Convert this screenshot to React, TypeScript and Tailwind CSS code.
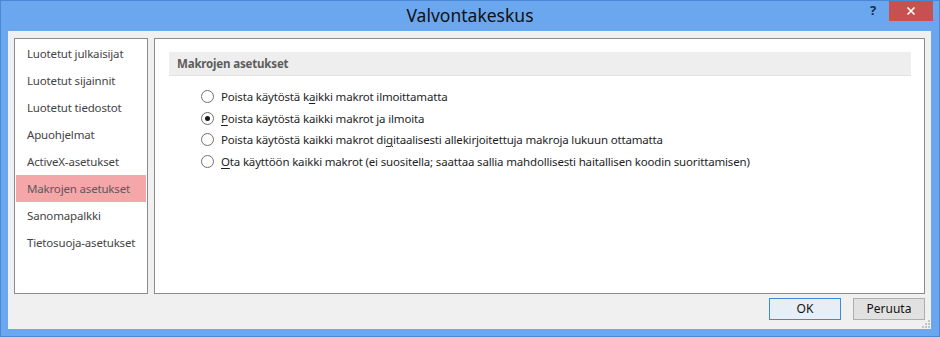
import React, { useState } from 'react';

const sections = [
  'Luotetut julkaisijat',
  'Luotetut sijainnit',
  'Luotetut tiedostot',
  'Apuohjelmat',
  'ActiveX-asetukset',
  'Makrojen asetukset',
  'Sanomapalkki',
  'Tietosuoja-asetukset',
];

// label split into [before, underlined letter, after]
const options: [string, string, string][] = [
  ['Poista käytöstä k', 'a', 'ikki makrot ilmoittamatta'],
  ['', 'P', 'oista käytöstä kaikki makrot ja ilmoita'],
  ['Poista käytöstä kaikki makrot di', 'g', 'itaalisesti allekirjoitettuja makroja lukuun ottamatta'],
  ['', 'O', 'ta käyttöön kaikki makrot (ei suositella; saattaa sallia mahdollisesti haitallisen koodin suorittamisen)'],
];

const Radio = ({ checked }: { checked: boolean }) => (
  <span className="w-[13px] h-[13px] rounded-full border border-[#6f6f6f] bg-white flex items-center justify-center shrink-0">
    {checked && <span className="w-[5px] h-[5px] rounded-full bg-[#1a1a1a]" />}
  </span>
);

const Grip = () => (
  <svg width="8" height="8" viewBox="0 0 8 8">
    {[
      [6, 0], [3, 3], [6, 3], [0, 6], [3, 6], [6, 6],
    ].map(([x, y], i) => (
      <rect key={i} x={x} y={y} width="2" height="2" fill="#c4c4c4" />
    ))}
  </svg>
);

const App = () => {
  const [selected, setSelected] = useState(1);
  const active = 'Makrojen asetukset';

  return (
    <div
      className="w-[940px] h-[337px] bg-[#6ba7ef] border border-[#4a88d6] flex flex-col overflow-hidden"
      style={{ fontFamily: '"Noto Sans", "Liberation Sans", sans-serif' }}
    >
      {/* title bar */}
      <div className="h-[30px] shrink-0 grid grid-cols-[1fr_auto_1fr]">
        <div />
        <div className="text-[17.5px] text-[#111] leading-[28px]">Valvontakeskus</div>
        <div className="flex justify-end items-start pr-[6px]">
          <div className="w-[20px] h-[20px] flex items-center justify-center text-[13px] font-bold text-[#1c2b4a] mr-[6px]">?</div>
          <div className="w-[44px] h-[20px] bg-[#c75050] flex items-center justify-center">
            <svg width="10" height="10" viewBox="0 0 10 10">
              <path d="M1.5 1.5 L8.5 8.5 M8.5 1.5 L1.5 8.5" stroke="#fff" strokeWidth="1.6" />
            </svg>
          </div>
        </div>
      </div>

      {/* client area */}
      <div className="flex-1 ml-[7px] mr-[8px] mb-[7px] bg-[#f0f0f0] flex flex-col px-[6px] pt-[7px] text-[11.5px] tracking-[-0.17px]">
        <div className="flex gap-[6px] h-[256px]">
          {/* section list */}
          <div className="w-[134px] bg-white border border-[#8c8c8c] p-[1px] flex flex-col">
            {sections.map((s) => (
              <div
                key={s}
                className={`h-[27px] flex items-center pl-[11px] ${
                  s === active ? 'bg-[#f4a6a9] text-[#5a5a5a]' : 'text-[#444]'
                }`}
              >
                {s}
              </div>
            ))}
          </div>

          {/* settings panel */}
          <div className="flex-1 bg-white border border-[#8c8c8c] pl-[14px] pr-[13px] pt-[13px]">
            <div className="h-[24px] bg-[#eeeeee] border-b border-[#e2e2e2] flex items-center pl-[8px] font-bold text-[#5d5d5d]">
              Makrojen asetukset
            </div>
            <div className="pl-[32px] pt-[10px] flex flex-col">
              {options.map(([a, u, b], i) => (
                <div
                  key={i}
                  className="h-[21.5px] flex items-center gap-[7px] text-[#1e1e1e] cursor-default"
                  onClick={() => setSelected(i)}
                >
                  <Radio checked={selected === i} />
                  <span className="whitespace-nowrap">
                    {a}
                    <span className="underline underline-offset-2">{u}</span>
                    {b}
                  </span>
                </div>
              ))}
            </div>
          </div>
        </div>

        {/* buttons */}
        <div className="flex justify-end items-start gap-[12px] pt-[4px] flex-1 text-[12px] tracking-normal">
          <button className="w-[72px] h-[22px] bg-[#e7eef5] border border-[#3c8bd8] text-[#111]">OK</button>
          <button className="w-[72px] h-[22px] bg-[#e1e1e1] border border-[#adadad] text-[#111]">Peruuta</button>
        </div>
        <div className="flex justify-end -mr-[5px] -mt-[10px] mb-[1px]">
          <Grip />
        </div>
      </div>
    </div>
  );
};

export default App;
